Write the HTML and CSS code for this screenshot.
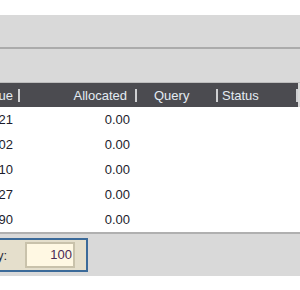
FILE: index.html
```html
<!DOCTYPE html>
<html>
<head>
<meta charset="utf-8">
<link rel="stylesheet" href="styles.css">
</head>
<body>
<div class="page">
  <div class="toolbar"></div>
  <div class="toolbar second"></div>
  <div class="grid">
    <div class="head">
      <div class="c c1"><span>Value</span><i class="sep"></i></div>
      <div class="c c2"><span>Allocated</span><i class="sep"></i></div>
      <div class="c c3"><span>Query</span><i class="sep"></i></div>
      <div class="c c4"><span>Status</span><i class="sep"></i></div>
    </div>
    <div class="row"><div class="c c1">4,512.21</div><div class="c c2">0.00</div><div class="c c3"></div><div class="c c4"></div></div>
    <div class="row"><div class="c c1">1,830.02</div><div class="c c2">0.00</div><div class="c c3"></div><div class="c c4"></div></div>
    <div class="row"><div class="c c1">2,745.10</div><div class="c c2">0.00</div><div class="c c3"></div><div class="c c4"></div></div>
    <div class="row"><div class="c c1">3,961.27</div><div class="c c2">0.00</div><div class="c c3"></div><div class="c c4"></div></div>
    <div class="row"><div class="c c1">5,208.90</div><div class="c c2">0.00</div><div class="c c3"></div><div class="c c4"></div></div>
  </div>
  <div class="footer">
    <div class="pager">
      <span class="label">Page Quantity:</span>
      <div class="input">100</div>
    </div>
  </div>
</div>
</body>
</html>
```
FILE: styles.css
```css
html, body {
  margin: 0;
  padding: 0;
  background: #ffffff;
}
body {
  font-family: "Liberation Sans", Arial, sans-serif;
  font-size: 13px;
  overflow: hidden;
}
.page {
  padding-top: 15px;
  width: 300px;
}
.toolbar {
  height: 32px;
  background: #d9d9d9;
  border-bottom: 2px solid #ababab;
}
.toolbar.second {
  height: 33px;
  border-bottom: 1px solid #bdbdbd;
}
.grid {
  background: #ffffff;
}
.head {
  display: flex;
  height: 24px;
  background: #4b4b50;
  color: #e4ebf3;
  border-right: 2px solid #d9d9d9;
  box-sizing: border-box;
}
.row {
  display: flex;
  height: 25px;
  color: #1c1c2c;
}
.c {
  display: flex;
  align-items: center;
  white-space: nowrap;
  flex: none;
  box-sizing: border-box;
}
.c1 { width: 20px; justify-content: flex-end; }
.c2 { width: 117px; justify-content: flex-end; }
.c3 { width: 81px; }
.c4 { width: 80px; }
.head .c1 span { margin-right: 5px; }
.head .c2 span { margin-right: 8px; }
.head .c3 span { margin-left: 17px; flex: 1; }
.head .c4 span { margin-left: 4px; flex: 1; }
.row .c1 { padding-right: 7px; }
.row .c2 { padding-right: 7px; }
.sep {
  width: 2px;
  height: 13px;
  background: #cfd0d2;
  flex: none;
}
.footer {
  border-top: 2px solid #b0b0b0;
  background: #d9d9d9;
  padding-top: 4px;
  box-sizing: border-box;
  height: 44px;
}
.pager {
  display: flex;
  align-items: center;
  justify-content: flex-end;
  width: 86px;
  height: 30px;
  background: #e5dfcc;
  border: 2px solid #3b6a99;
  border-left: none;
}
.label {
  color: #2a2a3a;
  margin-right: 18px;
  white-space: nowrap;
}
.input {
  width: 45px;
  height: 22px;
  border: 2px solid #c9c2ab;
  background: #fff8e3;
  color: #4a2a55;
  text-align: right;
  line-height: 22px;
  padding-right: 1px;
  margin-right: 11px;
  flex: none;
}
```
